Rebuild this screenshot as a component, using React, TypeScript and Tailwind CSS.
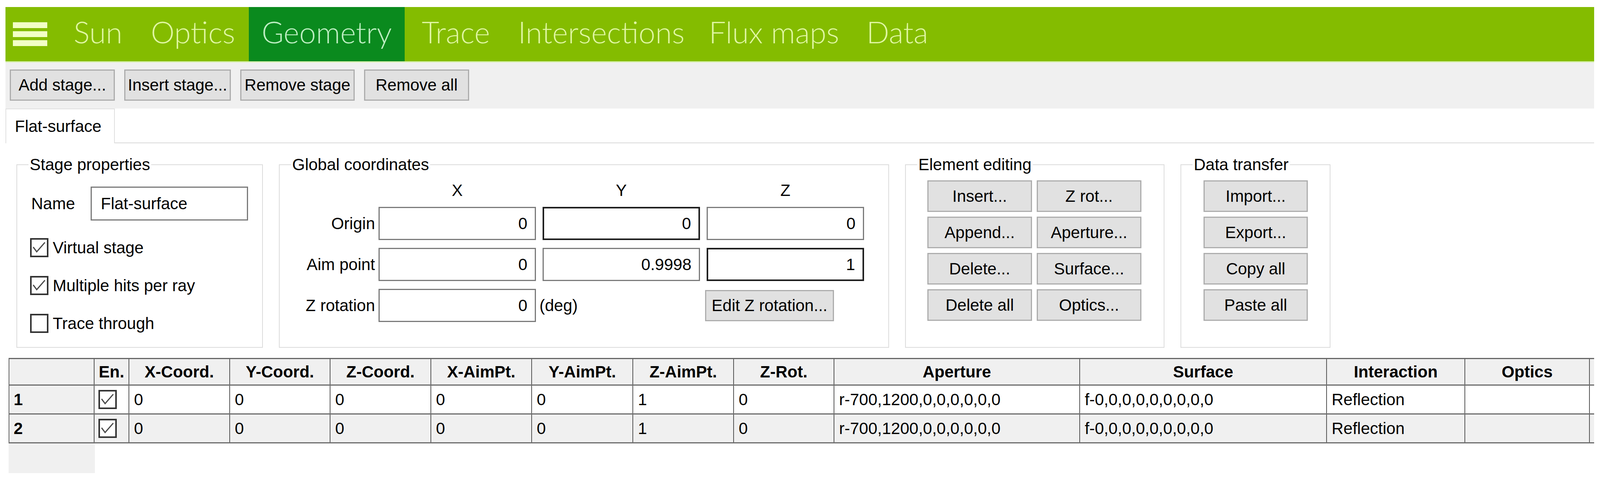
import React from "react";

const tabs = [
  { label: "Sun", w: "w-[200px]", active: false },
  { label: "Optics", w: "w-[286px]", active: false },
  { label: "Geometry", w: "w-[399px]", active: true },
  { label: "Trace", w: "w-[262px]", active: false },
  { label: "Intersections", w: "w-[483px]", active: false },
  { label: "Flux maps", w: "w-[401px]", active: false },
  { label: "Data", w: "w-[230px]", active: false },
];

function Btn({ children, className = "" }: { children: React.ReactNode; className?: string }) {
  return (
    <div
      className={
        "flex items-center justify-center bg-[#e1e1e1] border-[3px] border-[#adadad] text-[42px] leading-none text-black whitespace-nowrap " +
        className
      }
    >
      {children}
    </div>
  );
}

function CheckBox({ checked }: { checked: boolean }) {
  return (
    <div className="w-[47px] h-[49px] shrink-0 border-[4px] border-[#333333] bg-white flex items-center justify-center">
      {checked && (
        <svg width="39" height="41" viewBox="0 0 39 41">
          <polyline points="4,19 13,31 34,7" fill="none" stroke="#4a4a4a" strokeWidth="3" />
        </svg>
      )}
    </div>
  );
}

function Field({ value, dark = false, className = "" }: { value: string; dark?: boolean; className?: string }) {
  return (
    <div
      className={
        "h-[85px] bg-white flex items-center justify-end pr-[19px] text-[42px] " +
        (dark ? "border-[4px] border-[#1e1e1e] " : "border-[3px] border-[#7a7a7a] ") +
        className
      }
    >
      {value}
    </div>
  );
}

const cols =
  "grid grid-cols-[218px_89px_258px_257px_258px_258px_259px_258px_257px_629px_632px_354px_319px_1fr]";

const headers = [
  "",
  "En.",
  "X-Coord.",
  "Y-Coord.",
  "Z-Coord.",
  "X-AimPt.",
  "Y-AimPt.",
  "Z-AimPt.",
  "Z-Rot.",
  "Aperture",
  "Surface",
  "Interaction",
  "Optics",
  "",
];

const rowVals = ["0", "0", "0", "0", "0", "1", "0", "r-700,1200,0,0,0,0,0,0", "f-0,0,0,0,0,0,0,0,0", "Reflection", "", ""];

function TableRow({ n, bg }: { n: string; bg: string }) {
  return (
    <div className={cols + " h-[74px] border-b-[3px] border-[#6d6d6d] " + bg}>
      <div className="bg-[#f0f0f0] border-r-2 border-[#555555] flex items-center pl-[11px] font-bold text-[42px]">{n}</div>
      <div className="border-r-2 border-[#555555] flex items-center pl-[10px]">
        <CheckBox checked />
      </div>
      {rowVals.map((v, i) => (
        <div
          key={i}
          className={
            "flex items-center pl-[12px] text-[42px] whitespace-nowrap overflow-hidden " +
            (i < rowVals.length - 1 ? "border-r-2 border-[#555555]" : "")
          }
        >
          {v}
        </div>
      ))}
    </div>
  );
}

export default function App() {
  return (
    <div className="w-full min-h-screen bg-white pt-[18px] pl-[14px] pr-[15px] overflow-hidden font-['Liberation_Sans',Arial,sans-serif] text-black">
      {/* Header */}
      <div className="flex h-[139px] bg-[#84bc00]">
        <div className="w-[137px] flex items-center pl-[19px]">
          <div className="flex flex-col gap-[8px]">
            <div className="w-[88px] h-[15px] bg-[#f2ffc6]" />
            <div className="w-[88px] h-[15px] bg-[#f2ffc6]" />
            <div className="w-[88px] h-[15px] bg-[#f2ffc6]" />
          </div>
        </div>
        {tabs.map((t) => (
          <div
            key={t.label}
            className={
              t.w +
              " flex items-center justify-center pb-[12px] font-['Lato',sans-serif] font-light text-[77px] whitespace-nowrap " +
              (t.active ? "bg-[#0a8a1e] text-[#bdeec2]" : "text-[#e0f6a2]")
            }
          >
            {t.label}
          </div>
        ))}
      </div>

      {/* Toolbar */}
      <div className="h-[121px] bg-[#f0f0f0] border-t-[3px] border-[#d8f0b0] flex items-start pt-[18px] pl-[11px] gap-[24px]">
        <Btn className="w-[269px] h-[80px]">Add stage...</Btn>
        <Btn className="w-[273px] h-[80px]">Insert stage...</Btn>
        <Btn className="w-[293px] h-[80px]">Remove stage</Btn>
        <Btn className="w-[269px] h-[80px]">Remove all</Btn>
      </div>

      {/* Tab row */}
      <div className="flex h-[89px]">
        <div className="w-[280px] h-[89px] bg-white border-l-2 border-r-2 border-t-2 border-[#e0e0e0] flex items-center pl-[22px] text-[42px]">
          Flat-surface
        </div>
        <div className="flex-1 h-[89px] border-b-2 border-[#d9d9d9]" />
      </div>

      {/* Group boxes */}
      <div className="flex pl-[28px] gap-[41px] mt-[30px]">
        <fieldset className="w-[631px] h-[494px] min-w-0 border-2 border-[#dcdcdc]">
          <legend className="ml-[29px] px-[3px] text-[42px] leading-[50px]">Stage properties</legend>
          <div className="pl-[33px] pt-[31px]">
            <div className="flex items-center h-[87px]">
              <div className="w-[155px] pl-[3px] text-[42px]">Name</div>
              <div className="w-[403px] h-[87px] border-[3px] border-[#7a7a7a] flex items-center pl-[23px] text-[42px]">
                Flat-surface
              </div>
            </div>
            <div className="mt-[45px] flex flex-col gap-[48px]">
              <div className="flex items-center gap-[11px] h-[49px] text-[42px]">
                <CheckBox checked />
                <span>Virtual stage</span>
              </div>
              <div className="flex items-center gap-[11px] h-[49px] text-[42px]">
                <CheckBox checked />
                <span>Multiple hits per ray</span>
              </div>
              <div className="flex items-center gap-[11px] h-[49px] text-[42px]">
                <CheckBox checked={false} />
                <span>Trace through</span>
              </div>
            </div>
          </div>
        </fieldset>

        <fieldset className="w-[1562px] h-[494px] min-w-0 border-2 border-[#dcdcdc]">
          <legend className="ml-[29px] px-[3px] text-[42px] leading-[50px]">Global coordinates</legend>
          <div className="mt-[15px] h-[50px] flex items-center text-[42px]">
            <div className="w-[253px]" />
            <div className="w-[403px] text-center">X</div>
            <div className="w-[403px] ml-[17px] text-center">Y</div>
            <div className="w-[403px] ml-[17px] text-center">Z</div>
          </div>
          <div className="mt-[18px] flex flex-col gap-[20px] text-[42px]">
            <div className="flex items-center">
              <div className="w-[253px] pr-[9px] text-right">Origin</div>
              <Field value="0" className="w-[403px]" />
              <Field value="0" dark className="w-[403px] ml-[17px]" />
              <Field value="0" className="w-[403px] ml-[17px]" />
            </div>
            <div className="flex items-center">
              <div className="w-[253px] pr-[9px] text-right">Aim point</div>
              <Field value="0" className="w-[403px]" />
              <Field value="0.9998" className="w-[403px] ml-[17px]" />
              <Field value="1" dark className="w-[403px] ml-[17px]" />
            </div>
            <div className="flex items-center">
              <div className="w-[253px] pr-[9px] text-right">Z rotation</div>
              <Field value="0" className="w-[403px]" />
              <div className="w-[420px] pl-[9px]">(deg)</div>
              <Btn className="w-[330px] h-[80px] ml-[13px]">Edit Z rotation...</Btn>
            </div>
          </div>
        </fieldset>

        <fieldset className="w-[664px] h-[494px] min-w-0 border-2 border-[#dcdcdc]">
          <legend className="ml-[29px] px-[3px] text-[42px] leading-[50px]">Element editing</legend>
          <div className="mt-[15px] ml-[55px] grid grid-cols-[268px_268px] gap-x-[12px] gap-y-[12px]">
            <Btn className="h-[81px]">Insert...</Btn>
            <Btn className="h-[81px]">Z rot...</Btn>
            <Btn className="h-[81px]">Append...</Btn>
            <Btn className="h-[81px]">Aperture...</Btn>
            <Btn className="h-[81px]">Delete...</Btn>
            <Btn className="h-[81px]">Surface...</Btn>
            <Btn className="h-[81px]">Delete all</Btn>
            <Btn className="h-[81px]">Optics...</Btn>
          </div>
        </fieldset>

        <fieldset className="w-[384px] h-[494px] min-w-0 border-2 border-[#dcdcdc]">
          <legend className="ml-[29px] px-[3px] text-[42px] leading-[50px]">Data transfer</legend>
          <div className="mt-[15px] ml-[57px] w-[267px] flex flex-col gap-[12px]">
            <Btn className="h-[81px]">Import...</Btn>
            <Btn className="h-[81px]">Export...</Btn>
            <Btn className="h-[81px]">Copy all</Btn>
            <Btn className="h-[81px]">Paste all</Btn>
          </div>
        </fieldset>
      </div>

      {/* Table */}
      <div className="mt-[26px] ml-[8px] border-t-[3px] border-l-2 border-[#666666] overflow-hidden">
        <div className={cols + " h-[68px] border-b-[3px] border-[#6d6d6d] bg-[#f0f0f0]"}>
          {headers.map((h, i) => (
            <div
              key={i}
              className={
                "flex items-center justify-center font-bold text-[42px] whitespace-nowrap " +
                (i < headers.length - 1 ? "border-r-2 border-[#555555]" : "")
              }
            >
              {h}
            </div>
          ))}
        </div>
        <TableRow n="1" bg="bg-white" />
        <TableRow n="2" bg="bg-[#f0f0f0]" />
      </div>
      <div className="ml-[8px] w-[221px] h-[76px] bg-[#f0f0f0]" />
    </div>
  );
}
